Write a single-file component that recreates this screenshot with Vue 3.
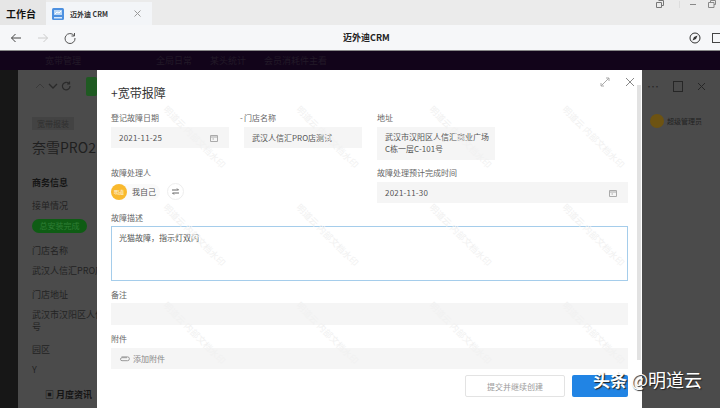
<script setup>
const marks = Array.from({ length: 12 }, (_, i) => i)
</script>

<template>
  <div class="page">
    <header class="tabbar">
      <strong class="home">工作台</strong>
      <div class="tab">
        <svg class="tab-icon" width="12" height="12" viewBox="0 0 12 12">
          <rect width="12" height="12" rx="1.5" fill="#4d90e0" />
          <rect x="2" y="2" width="8" height="5" fill="#bcd8f6" />
          <path d="M3 6 L5 4 L7 5 L9 3" stroke="#fff" fill="none" />
          <rect x="2" y="9" width="8" height="1.5" fill="#d7e8fa" />
        </svg>
        <span class="tab-name">迈外迪 CRM</span>
        <svg width="7" height="7" viewBox="0 0 7 7" class="tab-x"><path d="M.5.5l6 6M6.5.5l-6 6" stroke="#999" /></svg>
      </div>
      <div class="win">
        <svg width="8" height="8" viewBox="0 0 8 8"><path d="M2.5.5h5v5h-2M.5 2.5h5v5h-5z" stroke="#777" fill="none" /></svg>
        <i class="sep"></i>
        <svg width="8" height="8" viewBox="0 0 8 8"><path d="M1 4.5h6" stroke="#888" /></svg>
        <svg width="8" height="8" viewBox="0 0 8 8"><path d="M2.5 2V.5h5v4H6M.5 2.5h5.500v5h-5.500z" stroke="#888" fill="none" /></svg>
      </div>
    </header>

    <nav class="toolbar">
      <svg class="nav" width="12" height="12" viewBox="0 0 12 12"><path d="M11 6H1.500M5.500 2L1.500 6l4 4" stroke="#444" fill="none" /></svg>
      <svg class="nav" width="12" height="12" viewBox="0 0 12 12"><path d="M1 6h9.500M6.500 2l4 4-4 4" stroke="#ccc" fill="none" /></svg>
      <svg class="nav" width="12" height="12" viewBox="0 0 12 12"><path d="M10 3.500A5 5 0 1 0 11 6M10.500 1v3h-3" stroke="#555" fill="none" /></svg>
      <strong class="url">迈外迪CRM</strong>
      <div class="tools">
        <svg width="12" height="12" viewBox="0 0 12 12"><circle cx="6" cy="6" r="5" stroke="#333" fill="none" /><path d="M8.500 3.500L7 7 3.500 8.500 5 5z" fill="#333" /></svg>
        <svg width="10" height="12" viewBox="0 0 10 12"><rect x=".5" y="1.500" width="12" height="9" stroke="#444" fill="none" /></svg>
      </div>
    </nav>

    <main class="stage">
      <div class="appbar">
        <span class="appname">宽带管理</span>
        <span class="appitem first">全局日常</span>
        <span class="appitem">某头统计</span>
        <span class="appitem">会员消耗件主看</span>
      </div>

      <div class="workspace">
        <aside class="rail"></aside>
        <section class="record">
          <div class="record-top">
            <div class="record-nav">
              <svg width="10" height="8" viewBox="0 0 10 8"><path d="M1 6l4-4 4 4" stroke="#3a3a3a" fill="none" /></svg>
              <svg width="10" height="8" viewBox="0 0 10 8"><path d="M1 2l4 4 4-4" stroke="#2a2a2a" fill="none" stroke-width="1.300" /></svg>
              <svg width="10" height="10" viewBox="0 0 10 10"><path d="M8 2.500A3.800 3.800 0 1 0 9 5M8.500 .5v2.500H6" stroke="#2a2a2a" fill="none" stroke-width="1.200" /></svg>
              <i class="green-btn"></i>
            </div>
            <div class="record-tools">
              <span class="dots">⋯</span><i class="panel"></i>
              <svg width="9" height="9" viewBox="0 0 9 9"><path d="M1 1l7 7M8 1L1 8" stroke="#262626" /></svg>
            </div>
          </div>
          <div class="record-tagrow">
            <span class="tag">宽带报装</span>
            <span class="owner"><i class="owner-dot"></i>超级管理员</span>
          </div>
          <h2 class="record-title">奈雪PRO2</h2>
          <h3 class="section">商务信息</h3>
          <p class="dim first-dim">接单情况</p>
          <span class="pill">总安装完成</span>
          <p class="dim shop">门店名称</p>
          <p class="dim value">武汉人信汇PRO店测试</p>
          <p class="dim addr">门店地址</p>
          <p class="dim value wrap">武汉市汉阳区人信汇商业广场C栋一层C-101号</p>
          <p class="dim park">园区</p>
          <p class="dim y">Y</p>
          <h3 class="section month">▣ 月度资讯</h3>
        </section>
      </div>

      <div class="modal">
        <div class="modal-head">
          <h1>+宽带报障</h1>
          <div class="modal-actions">
            <svg width="10" height="10" viewBox="0 0 10 10"><path d="M1 9l8-8M6 1h3v3M1 6v3h3" stroke="#aaa" fill="none" /></svg>
            <svg width="10" height="10" viewBox="0 0 10 10"><path d="M1 1l8 8M9 1L1 9" stroke="#888" /></svg>
          </div>
        </div>

        <form class="form">
          <div class="field">
            <label>登记故障日期</label>
            <div class="input between">2021-11-25
              <svg class="cal" width="8" height="8" viewBox="0 0 8 8"><path d="M.5 1.500h7v6h-7zM.5 3h7M2.500 5h1.500" stroke="#aaa" fill="none" /></svg>
            </div>
          </div>
          <div class="field">
            <label class="req">门店名称</label>
            <div class="input">武汉人信汇PRO店测试</div>
          </div>
          <div class="field">
            <label>地址</label>
            <div class="input tall">武汉市汉阳区人信汇商业广场<br />C栋一层C-101号</div>
          </div>
          <div class="field"></div>

          <div class="field wide">
            <label>故障处理人</label>
            <div class="people">
              <span class="person"><i class="avatar">明道</i><span>我自己</span></span>
              <span class="swap"><svg width="9" height="7" viewBox="0 0 9 7"><path d="M1 2h6.500L6 .5M8 5H1.500L3 6.500" stroke="#666" fill="none" /></svg></span>
            </div>
          </div>
          <div class="field wide">
            <label>故障处理预计完成时间</label>
            <div class="input between">2021-11-30
              <svg class="cal" width="8" height="8" viewBox="0 0 8 8"><path d="M.5 1.500h7v6h-7zM.5 3h7M2.500 5h1.500" stroke="#aaa" fill="none" /></svg>
            </div>
          </div>

          <div class="field full desc">
            <label>故障描述</label>
            <div class="textarea">光猫故障，指示灯双闪</div>
          </div>
          <div class="field full note">
            <label>备注</label>
            <div class="input empty"></div>
          </div>
          <div class="field full attach">
            <label>附件</label>
            <div class="input">
              <svg class="clip" width="11" height="6" viewBox="0 0 11 6"><path d="M8 1.500H3a1.500 1.500 0 0 0 0 3h5.500a1.800 1.800 0 0 0 0-3.800H2.500" stroke="#999" fill="none" transform="translate(0 .2)" /></svg>
              <span class="muted">添加附件</span>
            </div>
          </div>
        </form>

        <div class="footer">
          <button type="button" class="btn ghost">提交并继续创建</button>
          <button type="button" class="btn primary"></button>
        </div>

        <div class="scrollbar"></div>
        <div class="watermarks">
          <div v-for="m in marks" :key="m" class="cell"><span>明道云 内部文档水印</span></div>
        </div>
      </div>

      <div class="brand"><b>头条</b> @明道云</div>
    </main>
  </div>
</template>

<style>
html, body { margin: 0; background: #4b4b4b; }
</style>

<style scoped>
.page {
  width: 720px;
  height: 408px;
  overflow: hidden;
  display: flex;
  flex-direction: column;
  font-family: "Noto Sans CJK SC", "Liberation Sans", sans-serif;
  color: #555;
}
.tabbar {
  height: 25px;
  flex: none;
  background: #ebebeb;
  display: flex;
  align-items: flex-end;
  position: relative;
}
.home {
  width: 46px;
  padding-left: 6px;
  box-sizing: border-box;
  height: 25px;
  line-height: 27px;
  font-size: 10px;
  color: #111;
  background: #e6e6e6;
}
.tab {
  width: 106px;
  height: 23px;
  background: #f3f5f8;
  display: flex;
  align-items: center;
  padding-left: 6px;
  box-sizing: border-box;
}
.tab-name {
  margin-left: 6px;
  font-size: 7px;
  font-weight: 700;
  color: #333;
  width: 64px;
}
.tab-x { flex: none; }
.win {
  position: absolute;
  top: 0;
  right: 4px;
  display: flex;
  gap: 11px;
  align-items: center;
  height: 8px;
}
.sep { width: 1px; height: 7px; background: #ddd; margin: 0 -2px 0 4px; }
.toolbar {
  height: 25px;
  flex: none;
  background: #f6f7f9;
  border-bottom: 1px solid #888;
  display: flex;
  align-items: center;
  padding-left: 10px;
  gap: 15px;
  position: relative;
}
.url {
  position: absolute;
  left: 343px;
  font-size: 9px;
  color: #222;
}
.tools {
  margin-left: auto;
  display: flex;
  gap: 11px;
  margin-right: -3px;
  width: 34px;
  overflow: hidden;
}
.tools svg { flex: none; }
.stage {
  flex: 1;
  position: relative;
  background: #4b4b4b;
  display: flex;
  flex-direction: column;
  min-height: 0;
}
.appbar {
  height: 19px;
  flex: none;
  background: #12041a;
  color: #221a28;
  font-size: 9px;
  line-height: 19px;
  display: flex;
  padding-left: 45px;
}
.appitem.first { margin-left: 75px; }
.appitem { margin-right: 18px; }
.workspace { flex: 1; display: flex; min-height: 0; }
.rail { width: 18px; background: #171717; flex: none; }
.record {
  flex: 1;
  background: #4b4b4b;
  padding-left: 14px;
  color: #222;
  font-size: 9px;
  min-width: 0;
}
.record p { margin: 0; color: #232323; line-height: 12px; }
.record-top { display: flex; justify-content: space-between; height: 32px; align-items: center; padding-right: 14px; }
.record-nav { display: flex; gap: 3px; align-items: center; padding-left: 3px; }
.green-btn { width: 11px; height: 19px; background: #1f5a22; border-radius: 2px; margin-left: 12px; }
.record-tools { display: flex; gap: 14px; align-items: center; color: #262626; font-size: 12px; }
.panel { width: 8px; height: 9px; border: 1px solid #262626; }
.record-tagrow { display: flex; justify-content: space-between; align-items: center; height: 26px; margin-top: 6px; padding-right: 18px; }
.tag { background: #434343; color: #2f2f2f; padding: 1px 5px; font-size: 8px; margin-top: 4px; }
.owner { display: flex; align-items: center; gap: 3px; color: #222; font-size: 7px; }
.owner-dot { width: 14px; height: 14px; border-radius: 50%; background: #6d5312; }
.record-title { margin: 0; font-size: 14px; font-weight: 400; line-height: 26px; color: #1f1f1f; }
.section { margin: 14px 0 0; font-size: 9px; line-height: 18px; color: #151515; }
.record p.first-dim { margin-top: 8px; }
.pill {
  display: block;
  width: 55px;
  height: 14px;
  line-height: 14px;
  margin-top: 7px;
  background: #0f5c14;
  color: #2e7f34;
  border-radius: 8px;
  text-align: center;
  font-size: 8px;
}
.record p.shop { margin-top: 12px; }
.record p.value { margin-top: 8px; }
.record p.wrap { width: 178px; }
.record p.addr { margin-top: 12px; }
.record p.park { margin-top: 11px; }
.record p.y { margin-top: 8px; }
.section.month { margin: 10px 0 0 13px; }

.modal {
  position: absolute;
  left: 97px;
  top: 19px;
  bottom: 0;
  width: 545px;
  background: #fff;
  padding: 0 15px 0 14px;
  box-sizing: border-box;
  overflow: hidden;
}
.modal-head { height: 42px; display: flex; justify-content: space-between; align-items: flex-start; }
.modal-head h1 { margin: 13px 0 0; font-size: 12px; font-weight: 400; line-height: 20px; color: #333; }
.modal-actions { display: flex; gap: 15px; margin: 7px -8px 0 0; }
.form {
  display: grid;
  grid-template-columns: repeat(4, 118px);
  column-gap: 15px;
  align-items: start;
}
.field label {
  display: block;
  font-size: 8px;
  line-height: 12px;
  color: #666;
  margin-bottom: 3px;
}
.req { position: relative; }
.req::before { content: "-"; position: absolute; left: -4px; top: 0; }
.input {
  min-height: 21px;
  background: #f5f5f5;
  font-size: 8px;
  line-height: 12px;
  padding: 4px 8px;
  box-sizing: border-box;
  color: #555;
  display: flex;
  align-items: center;
}
.between { justify-content: space-between; letter-spacing: .2px; }
.cal { margin-right: 3px; }
.tall { display: block; height: 33px; white-space: nowrap; }
.wide { grid-column: span 2; margin-top: 7px; }
.people { display: flex; align-items: center; gap: 7px; margin-top: 4px; }
.person { display: flex; align-items: center; gap: 5px; font-size: 8px; color: #555; background: #fafafa; border-radius: 8px; }
.person span { padding-right: 4px; }
.avatar {
  width: 16px;
  height: 16px;
  line-height: 16px;
  border-radius: 50%;
  background: #f9b92e;
  color: #fff;
  font-style: normal;
  font-size: 5px;
  text-align: center;
}
.swap {
  width: 15px;
  height: 15px;
  border: 1px solid #eee;
  border-radius: 50%;
  display: flex;
  align-items: center;
  justify-content: center;
}
.full { grid-column: 1 / -1; }
.full label { margin-bottom: 2px; }
.desc { margin-top: 9px; }
.textarea {
  height: 55px;
  border: 1px solid #a5cdeb;
  box-sizing: border-box;
  padding: 3px 7px;
  font-size: 8px;
  line-height: 15px;
  color: #555;
}
.note { margin-top: 8px; }
.empty { height: 22px; }
.attach { margin-top: 8px; }
.attach label { margin-bottom: 3px; }
.clip { margin-right: 3px; }
.muted { color: #888; }
.footer {
  position: absolute;
  left: 368px;
  top: 305px;
  display: flex;
  gap: 7px;
}
.btn {
  height: 22px;
  border-radius: 2px;
  font-family: inherit;
  font-size: 8px;
  padding: 0;
}
.ghost { width: 100px; background: #fff; border: 1px solid #e3e3e3; color: #9a9a9a; }
.primary { width: 56px; background: #2184e4; border: 0; }
.scrollbar {
  position: absolute;
  right: 1px;
  top: 15px;
  width: 4px;
  height: 275px;
  background: #e2e2e2;
}
.watermarks {
  position: absolute;
  top: 0;
  bottom: 0;
  left: 68px;
  width: 532px;
  display: grid;
  grid-template-columns: repeat(4, 133px);
  grid-auto-rows: 98px;
  pointer-events: none;
}
.cell { position: relative; }
.cell span {
  position: absolute;
  left: -16px;
  top: 71px;
  width: 110px;
  font-size: 9px;
  line-height: 11px;
  color: #f1f1f1;
  white-space: nowrap;
  transform: rotate(45deg);
}
.brand {
  position: absolute;
  left: 593px;
  top: 316px;
  font-size: 18px;
  line-height: 24px;
  color: #fff;
  white-space: nowrap;
  text-shadow: 1px 1px 1px #222;
  pointer-events: none;
}
.brand b { font-size: 17px; }
</style>
